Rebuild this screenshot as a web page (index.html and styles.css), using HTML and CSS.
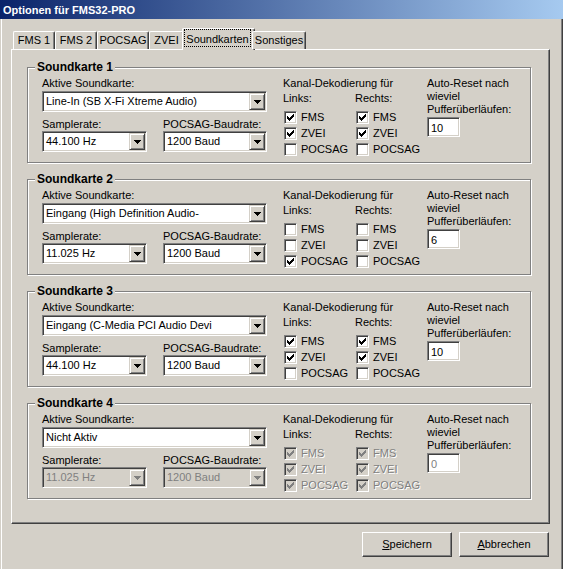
FILE: index.html
```html
<!DOCTYPE html>
<html lang="de">

<head>
    <meta charset="UTF-8">
    <meta name="viewport" content="width=device-width, initial-scale=1.0">
    <title>Optionen für FMS32-PRO</title>
    <link rel="stylesheet" href="styles.css">
</head>

<body>
    <!-- Häkchen und Pfeil für Checkboxen / Comboboxen -->
    <svg class="defs">
        <symbol id="tick" viewBox="1 1 11 11">
            <path d="M3 5h1v3H3zM4 6h1v3H4zM5 7h1v3H5zM6 6h1v3H6zM7 5h1v3H7zM8 4h1v3H8zM9 3h1v3H9z" />
        </symbol>
        <symbol id="arrow" viewBox="0 0 7 4">
            <path d="M0 0h7v1H0zM1 1h5v1H1zM2 2h3v1H2zM3 3h1v1H3z" />
        </symbol>
    </svg>

    <div class="window">
        <div class="caption">Optionen für FMS32-PRO</div>
        <div class="client">
            <div class="tabctl">
                <ul class="tabs">
                    <li class="tab">FMS 1</li>
                    <li class="tab">FMS 2</li>
                    <li class="tab">POCSAG</li>
                    <li class="tab">ZVEI</li>
                    <li class="tab active"><span class="focus">Soundkarten</span></li>
                    <li class="tab">Sonstiges</li>
                </ul>
                <div class="page">

                    <!-- Soundkarte 1 -->
                    <div class="group">
                        <span class="legend">Soundkarte 1</span>
                        <div class="dev">
                            <label class="lbl wide">Aktive Soundkarte:</label>
                            <div class="combo wide"><span class="val">Line-In (SB X-Fi Xtreme Audio)</span><span class="drop"><svg><use href="#arrow" /></svg></span></div>
                            <label class="lbl row2">Samplerate:</label>
                            <label class="lbl row2">POCSAG-Baudrate:</label>
                            <div class="combo"><span class="val">44.100 Hz</span><span class="drop"><svg><use href="#arrow" /></svg></span></div>
                            <div class="combo"><span class="val">1200 Baud</span><span class="drop"><svg><use href="#arrow" /></svg></span></div>
                        </div>
                        <div class="kanal">
                            <div class="lbl head">Kanal-Dekodierung für</div>
                            <div class="chan">
                                <div class="lbl sub">Links:</div>
                                <div class="chk"><span class="cb"><svg><use href="#tick" /></svg></span>FMS</div>
                                <div class="chk"><span class="cb"><svg><use href="#tick" /></svg></span>ZVEI</div>
                                <div class="chk"><span class="cb"></span>POCSAG</div>
                            </div>
                            <div class="chan">
                                <div class="lbl sub">Rechts:</div>
                                <div class="chk"><span class="cb"><svg><use href="#tick" /></svg></span>FMS</div>
                                <div class="chk"><span class="cb"><svg><use href="#tick" /></svg></span>ZVEI</div>
                                <div class="chk"><span class="cb"></span>POCSAG</div>
                            </div>
                        </div>
                        <div class="reset">
                            <div class="lbl">Auto-Reset nach<br>wieviel<br>Pufferüberläufen:</div>
                            <div class="edit">10</div>
                        </div>
                    </div>

                    <!-- Soundkarte 2 -->
                    <div class="group">
                        <span class="legend">Soundkarte 2</span>
                        <div class="dev">
                            <label class="lbl wide">Aktive Soundkarte:</label>
                            <div class="combo wide"><span class="val">Eingang (High Definition Audio-</span><span class="drop"><svg><use href="#arrow" /></svg></span></div>
                            <label class="lbl row2">Samplerate:</label>
                            <label class="lbl row2">POCSAG-Baudrate:</label>
                            <div class="combo"><span class="val">11.025 Hz</span><span class="drop"><svg><use href="#arrow" /></svg></span></div>
                            <div class="combo"><span class="val">1200 Baud</span><span class="drop"><svg><use href="#arrow" /></svg></span></div>
                        </div>
                        <div class="kanal">
                            <div class="lbl head">Kanal-Dekodierung für</div>
                            <div class="chan">
                                <div class="lbl sub">Links:</div>
                                <div class="chk"><span class="cb"></span>FMS</div>
                                <div class="chk"><span class="cb"></span>ZVEI</div>
                                <div class="chk"><span class="cb"><svg><use href="#tick" /></svg></span>POCSAG</div>
                            </div>
                            <div class="chan">
                                <div class="lbl sub">Rechts:</div>
                                <div class="chk"><span class="cb"></span>FMS</div>
                                <div class="chk"><span class="cb"></span>ZVEI</div>
                                <div class="chk"><span class="cb"></span>POCSAG</div>
                            </div>
                        </div>
                        <div class="reset">
                            <div class="lbl">Auto-Reset nach<br>wieviel<br>Pufferüberläufen:</div>
                            <div class="edit">6</div>
                        </div>
                    </div>

                    <!-- Soundkarte 3 -->
                    <div class="group">
                        <span class="legend">Soundkarte 3</span>
                        <div class="dev">
                            <label class="lbl wide">Aktive Soundkarte:</label>
                            <div class="combo wide"><span class="val">Eingang (C-Media PCI Audio Devi</span><span class="drop"><svg><use href="#arrow" /></svg></span></div>
                            <label class="lbl row2">Samplerate:</label>
                            <label class="lbl row2">POCSAG-Baudrate:</label>
                            <div class="combo"><span class="val">44.100 Hz</span><span class="drop"><svg><use href="#arrow" /></svg></span></div>
                            <div class="combo"><span class="val">1200 Baud</span><span class="drop"><svg><use href="#arrow" /></svg></span></div>
                        </div>
                        <div class="kanal">
                            <div class="lbl head">Kanal-Dekodierung für</div>
                            <div class="chan">
                                <div class="lbl sub">Links:</div>
                                <div class="chk"><span class="cb"><svg><use href="#tick" /></svg></span>FMS</div>
                                <div class="chk"><span class="cb"><svg><use href="#tick" /></svg></span>ZVEI</div>
                                <div class="chk"><span class="cb"></span>POCSAG</div>
                            </div>
                            <div class="chan">
                                <div class="lbl sub">Rechts:</div>
                                <div class="chk"><span class="cb"><svg><use href="#tick" /></svg></span>FMS</div>
                                <div class="chk"><span class="cb"><svg><use href="#tick" /></svg></span>ZVEI</div>
                                <div class="chk"><span class="cb"></span>POCSAG</div>
                            </div>
                        </div>
                        <div class="reset">
                            <div class="lbl">Auto-Reset nach<br>wieviel<br>Pufferüberläufen:</div>
                            <div class="edit">10</div>
                        </div>
                    </div>

                    <!-- Soundkarte 4: nicht aktiv, alles ausgegraut -->
                    <div class="group">
                        <span class="legend">Soundkarte 4</span>
                        <div class="dev">
                            <label class="lbl wide">Aktive Soundkarte:</label>
                            <div class="combo wide"><span class="val">Nicht Aktiv</span><span class="drop"><svg><use href="#arrow" /></svg></span></div>
                            <label class="lbl row2">Samplerate:</label>
                            <label class="lbl row2">POCSAG-Baudrate:</label>
                            <div class="combo off"><span class="val">11.025 Hz</span><span class="drop"><svg><use href="#arrow" /></svg></span></div>
                            <div class="combo off"><span class="val">1200 Baud</span><span class="drop"><svg><use href="#arrow" /></svg></span></div>
                        </div>
                        <div class="kanal">
                            <div class="lbl head">Kanal-Dekodierung für</div>
                            <div class="chan">
                                <div class="lbl sub">Links:</div>
                                <div class="chk off"><span class="cb"><svg><use href="#tick" /></svg></span>FMS</div>
                                <div class="chk off"><span class="cb"><svg><use href="#tick" /></svg></span>ZVEI</div>
                                <div class="chk off"><span class="cb"><svg><use href="#tick" /></svg></span>POCSAG</div>
                            </div>
                            <div class="chan">
                                <div class="lbl sub">Rechts:</div>
                                <div class="chk off"><span class="cb"><svg><use href="#tick" /></svg></span>FMS</div>
                                <div class="chk off"><span class="cb"><svg><use href="#tick" /></svg></span>ZVEI</div>
                                <div class="chk off"><span class="cb"><svg><use href="#tick" /></svg></span>POCSAG</div>
                            </div>
                        </div>
                        <div class="reset">
                            <div class="lbl">Auto-Reset nach<br>wieviel<br>Pufferüberläufen:</div>
                            <div class="edit off">0</div>
                        </div>
                    </div>

                </div>
            </div>
            <div class="buttons">
                <button class="btn"><u>S</u>peichern</button>
                <button class="btn"><u>A</u>bbrechen</button>
            </div>
        </div>
    </div>
</body>

</html>
```

FILE: styles.css
```css
* {
    box-sizing: border-box;
}

body {
    margin: 0;
    background: #d4d0c8;
    color: #000;
    font: 11px/13px "Liberation Sans", Arial, sans-serif;
}

/* Symbol-Container, selbst unsichtbar */
.defs {
    position: absolute;
    width: 0;
    height: 0;
}

.window {
    width: 563px;
    height: 569px;
    display: flex;
    flex-direction: column;
}

.caption {
    height: 19px;
    padding-left: 3px;
    background: linear-gradient(to right, #0a246a, #a6caf0);
    color: #fff;
    font-weight: bold;
    line-height: 20px;
}

.client {
    flex: 1;
    padding: 9px 0 0 10px;
    border-left: 1px solid #d4d0c8;
    border-right: 1px solid #404040;
    box-shadow: inset 1px 0 #fff, inset -1px 0 #808080;
}

/* Registerkarten */
.tabctl {
    width: 539px;
}

.tabs {
    position: relative;
    z-index: 1;
    display: flex;
    align-items: flex-end;
    height: 21px;
    margin: 0;
    padding: 0 0 0 2px;
    list-style: none;
}

.tab {
    height: 18px;
    padding: 0;
    border: 1px solid;
    border-bottom: 0;
    border-color: #fff #404040 #fff #fff;
    border-radius: 2px 2px 0 0;
    box-shadow: inset -1px 0 #808080;
    background: #d4d0c8;
    line-height: 17px;
    text-align: center;
    white-space: nowrap;
}

/* Breiten wie im Original-Dialog */
.tab:nth-child(1) { width: 42px; }
.tab:nth-child(2) { width: 42px; }
.tab:nth-child(3) { width: 52px; }
.tab:nth-child(4) { width: 35px; }
.tab:nth-child(5) { width: 73px; }
.tab:nth-child(6) { width: 54px; margin-left: -1px; }

.tab.active {
    height: 22px;
    margin: 0 -2px -1px;
    padding: 0 3px 0 1px;
}

.focus {
    display: block;
    height: 18px;
    padding-top: 3px;
    line-height: 15px;
    outline: 1px dotted #000;
    outline-offset: -1px;
}

.page {
    height: 475px;
    padding: 17px 0 0 15px;
    border: 1px solid;
    border-color: #fff #404040 #404040 #fff;
    box-shadow: inset -1px -1px #808080;
}

/* Gruppenrahmen (geätzt) */
.group {
    position: relative;
    display: flex;
    width: 504px;
    height: 96px;
    margin-bottom: 16px;
    padding: 9px 0 0 14px;
    border: 1px solid #808080;
    box-shadow: inset 1px 1px #fff, 1px 1px #fff;
}

.legend {
    position: absolute;
    top: -7px;
    left: 7px;
    padding: 0 2px;
    background: #d4d0c8;
    font-size: 12px;
    font-weight: bold;
    line-height: 13px;
}

.lbl {
    display: block;
    white-space: nowrap;
}

.dev {
    display: grid;
    grid-template-columns: 105px 104px;
    column-gap: 16px;
    align-content: start;
    width: 225px;
}

.wide {
    grid-column: 1 / -1;
}

.combo.wide {
    margin-top: 1px;
}

.row2 {
    margin-top: 6px;
}

/* Combobox */
.combo {
    display: flex;
    align-items: center;
    height: 21px;
    padding: 1px;
    border: 1px solid;
    border-color: #808080 #fff #fff #808080;
    box-shadow: inset 1px 1px #404040, inset -1px -1px #d4d0c8;
    background: #fff;
}

.val {
    flex: 1;
    padding-left: 2px;
    overflow: hidden;
    white-space: nowrap;
}

.drop {
    display: flex;
    align-items: center;
    justify-content: center;
    width: 16px;
    height: 17px;
    border: 1px solid;
    border-color: #d4d0c8 #404040 #404040 #d4d0c8;
    box-shadow: inset 1px 1px #fff, inset -1px -1px #808080;
    background: #d4d0c8;
}

.drop svg {
    display: block;
    width: 7px;
    height: 4px;
    fill: #000;
}

.combo.off {
    background: #d4d0c8;
    color: #808080;
}

.combo.off .drop svg {
    fill: #808080;
}

/* Kanal-Dekodierung */
.kanal {
    display: grid;
    grid-template-columns: 72px 72px;
    align-content: start;
    margin-left: 16px;
}

.head {
    grid-column: 1 / -1;
}

.sub {
    margin: 2px 0 4px;
}

.chk {
    display: flex;
    align-items: center;
    height: 16px;
    white-space: nowrap;
}

.cb {
    width: 13px;
    height: 13px;
    margin: 0 4px 0 1px;
    border: 1px solid;
    border-color: #808080 #fff #fff #808080;
    box-shadow: inset 1px 1px #404040, inset -1px -1px #d4d0c8;
    background: #fff;
}

.cb svg {
    display: block;
    width: 11px;
    height: 11px;
    fill: #000;
}

.chk.off {
    color: #808080;
    text-shadow: 1px 1px #fff;
}

.chk.off .cb {
    background: #d4d0c8;
}

.chk.off .cb svg {
    fill: #808080;
}

/* Auto-Reset */
.reset {
    display: flex;
    flex-direction: column;
    align-items: flex-start;
}

.edit {
    width: 33px;
    height: 20px;
    margin-top: 1px;
    padding: 3px 3px 0;
    border: 1px solid;
    border-color: #808080 #fff #fff #808080;
    box-shadow: inset 1px 1px #404040, inset -1px -1px #d4d0c8;
    background: #fff;
    line-height: 14px;
}

.edit.off {
    color: #808080;
}

/* Schaltflächen */
.buttons {
    display: flex;
    justify-content: flex-end;
    gap: 7px;
    width: 538px;
    margin-top: 8px;
}

.btn {
    width: 90px;
    height: 25px;
    padding: 0;
    border: 1px solid;
    border-color: #fff #404040 #404040 #fff;
    box-shadow: inset -1px -1px #808080;
    background: #d4d0c8;
    color: #000;
    font: inherit;
}
```
